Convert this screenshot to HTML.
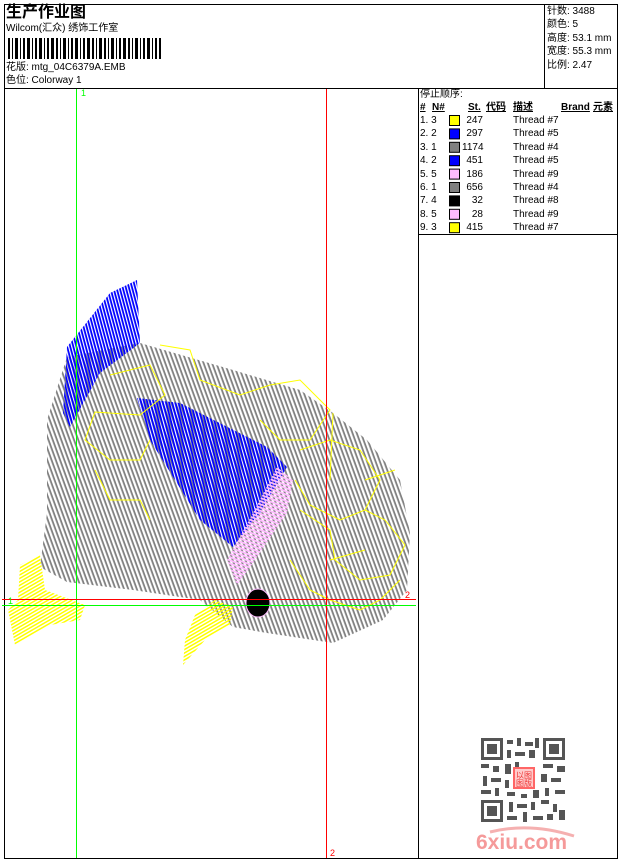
<!DOCTYPE html>
<html><head><meta charset="utf-8"><style>
body{margin:0;width:620px;height:860px;background:#fff;position:relative;overflow:hidden;font-family:"Liberation Sans","Noto Sans CJK SC",sans-serif;font-size:10px;color:#000}
.a{position:absolute;white-space:nowrap;line-height:12px}
.ln{position:absolute;background:#000}
.b{font-weight:bold;text-decoration:underline}
</style></head><body>
<div class="ln" style="left:4px;top:4px;width:614px;height:1px"></div>
<div class="ln" style="left:4px;top:4px;width:1px;height:855px"></div>
<div class="ln" style="left:617px;top:4px;width:1px;height:855px"></div>
<div class="ln" style="left:4px;top:858px;width:614px;height:1px"></div>
<div class="ln" style="left:4px;top:88px;width:614px;height:1px"></div>
<div class="ln" style="left:544px;top:4px;width:1px;height:84px"></div>
<div class="ln" style="left:418px;top:88px;width:1px;height:771px"></div>
<div class="ln" style="left:418px;top:234px;width:200px;height:1px"></div>

<div class="a" style="left:6px;top:4px;font-size:16px;line-height:18px;font-weight:bold">生产作业图</div>
<div class="a" style="left:6px;top:23px;font-size:10px">Wilcom(汇众) 绣饰工作室</div>
<svg class="a" style="left:8px;top:38px" width="155" height="21">
<g fill="#000">
<rect x="0" y="0" width="2" height="21"/><rect x="4" y="0" width="1" height="21"/><rect x="7" y="0" width="3" height="21"/><rect x="12" y="0" width="1" height="21"/><rect x="15" y="0" width="2" height="21"/><rect x="19" y="0" width="3" height="21"/><rect x="24" y="0" width="1" height="21"/><rect x="27" y="0" width="2" height="21"/><rect x="31" y="0" width="3" height="21"/><rect x="36" y="0" width="1" height="21"/><rect x="39" y="0" width="2" height="21"/><rect x="43" y="0" width="3" height="21"/><rect x="48" y="0" width="2" height="21"/><rect x="52" y="0" width="1" height="21"/><rect x="55" y="0" width="3" height="21"/><rect x="60" y="0" width="1" height="21"/><rect x="63" y="0" width="2" height="21"/><rect x="67" y="0" width="3" height="21"/><rect x="72" y="0" width="1" height="21"/><rect x="75" y="0" width="2" height="21"/><rect x="79" y="0" width="3" height="21"/><rect x="84" y="0" width="2" height="21"/><rect x="88" y="0" width="1" height="21"/><rect x="91" y="0" width="3" height="21"/><rect x="96" y="0" width="2" height="21"/><rect x="100" y="0" width="1" height="21"/><rect x="103" y="0" width="3" height="21"/><rect x="108" y="0" width="1" height="21"/><rect x="111" y="0" width="2" height="21"/><rect x="115" y="0" width="3" height="21"/><rect x="120" y="0" width="2" height="21"/><rect x="124" y="0" width="1" height="21"/><rect x="127" y="0" width="3" height="21"/><rect x="132" y="0" width="1" height="21"/><rect x="135" y="0" width="2" height="21"/><rect x="139" y="0" width="3" height="21"/><rect x="144" y="0" width="1" height="21"/><rect x="147" y="0" width="2" height="21"/><rect x="151" y="0" width="2" height="21"/>
</g></svg>
<div class="a" style="left:6px;top:62px">花版: mtg_04C6379A.EMB</div>
<div class="a" style="left:6px;top:75px">色位: Colorway 1</div>

<div class="a" style="left:547px;top:5px;line-height:13.4px">针数: 3488<br>颜色: 5<br>高度: 53.1 mm<br>宽度: 55.3 mm<br>比例: 2.47</div>

<div class="a" style="left:420px;top:89px">停止顺序:</div>
<div class="a b" style="left:420px;top:102px">#</div>
<div class="a b" style="left:432px;top:102px">N#</div>
<div class="a b" style="left:468px;top:102px">St.</div>
<div class="a b" style="left:486px;top:102px">代码</div>
<div class="a b" style="left:513px;top:102px">描述</div>
<div class="a b" style="left:561px;top:102px">Brand</div>
<div class="a b" style="left:593px;top:102px">元素</div>
<div class="a" style="left:420px;top:114px;line-height:13.4px">1. 3<br>2. 2<br>3. 1<br>4. 2<br>5. 5<br>6. 1<br>7. 4<br>8. 5<br>9. 3</div>
<div class="a" style="left:462px;top:114px;line-height:13.4px;text-align:right;width:21px">247<br>297<br>1174<br>451<br>186<br>656<br>32<br>28<br>415</div>
<div class="a" style="left:513px;top:114px;line-height:13.4px">Thread #7<br>Thread #5<br>Thread #4<br>Thread #5<br>Thread #9<br>Thread #4<br>Thread #8<br>Thread #9<br>Thread #7</div>
<svg class="a" style="left:449px;top:114px" width="12" height="122">
<g stroke="#000" stroke-width="1">
<rect x="0.5" y="1.5" width="10" height="10" fill="#ff0"/>
<rect x="0.5" y="14.9" width="10" height="10" fill="#00f"/>
<rect x="0.5" y="28.3" width="10" height="10" fill="#808080"/>
<rect x="0.5" y="41.7" width="10" height="10" fill="#00f"/>
<rect x="0.5" y="55.1" width="10" height="10" fill="#fbf"/>
<rect x="0.5" y="68.5" width="10" height="10" fill="#808080"/>
<rect x="0.5" y="81.9" width="10" height="10" fill="#000"/>
<rect x="0.5" y="95.3" width="10" height="10" fill="#fbf"/>
<rect x="0.5" y="108.7" width="10" height="10" fill="#ff0"/>
</g></svg>

<svg class="a" style="left:0;top:0" width="418" height="860">
<defs>
<pattern id="g" width="4" height="4" patternUnits="userSpaceOnUse" patternTransform="rotate(70)"><rect width="4" height="1.8" fill="#808080"/></pattern>
<pattern id="bl" width="3" height="3" patternUnits="userSpaceOnUse" patternTransform="rotate(75)"><rect width="3" height="1.8" fill="#00f"/></pattern>
<pattern id="pk" width="3" height="3" patternUnits="userSpaceOnUse" patternTransform="rotate(20)"><rect width="3" height="1.8" fill="#fbf"/></pattern>
<pattern id="yl" width="3" height="3" patternUnits="userSpaceOnUse" patternTransform="rotate(-30)"><rect width="3" height="1.5" fill="#ff0"/></pattern>
</defs>
<polygon fill="url(#g)" points="47,420 67,357 140,343 233,370 300,390 333,413 367,440 400,480 410,533 407,590 383,620 333,643 267,633 233,627 200,600 133,590 67,582 40,567 47,513"/>
<polygon fill="url(#bl)" points="63,413 67,347 110,293 137,280 140,343 100,373 70,427"/>
<polygon fill="url(#bl)" points="137,398 180,403 267,447 287,467 260,513 233,547 200,520 150,440"/>
<polygon fill="url(#pk)" points="277,467 293,480 287,513 253,563 237,585 227,560 253,513"/>
<g fill="none" stroke="#ff0" stroke-width="1">
<path d="M110,375 L150,365 165,395 140,415 95,412 85,440 110,460 140,460 150,440"/>
<path d="M160,345 L190,350 200,380 240,395 270,385 300,380 330,410 310,440 280,440 260,420"/>
<path d="M300,450 L330,440 360,450 380,480 365,510 340,520 310,505 295,480"/>
<path d="M300,510 L330,530 335,560 360,580 390,575 405,545 385,520 365,510"/>
<path d="M290,560 L310,590 330,600 360,610 380,600 400,580"/>
<path d="M95,470 L110,500 140,500 150,520"/>
<path d="M333,413 L330,480 M365,480 L395,470 M365,550 L330,560"/>
</g>
<polygon fill="url(#yl)" points="20,565 40,555 45,590 85,605 80,620 50,625 15,645 8,610 18,600"/>
<polygon fill="url(#yl)" points="233,607 215,600 195,615 185,640 183,665 205,640 230,625"/>
<ellipse cx="258" cy="603" rx="12" ry="14" fill="#000" stroke="#fbf" stroke-width="1"/>
<rect x="76" y="89" width="1" height="769" fill="#0f0"/>
<rect x="326" y="89" width="1" height="769" fill="#f00"/>
<rect x="2" y="599" width="414" height="1" fill="#f00"/>
<rect x="2" y="605" width="414" height="1" fill="#0f0"/>
<text x="81" y="96" fill="#0f0" font-size="9" font-family="Liberation Sans">1</text>
<text x="8" y="604" fill="#0f0" font-size="9" font-family="Liberation Sans">1</text>
<text x="405" y="598" fill="#f00" font-size="9" font-family="Liberation Sans">2</text>
<text x="330" y="856" fill="#f00" font-size="9" font-family="Liberation Sans">2</text>
</svg>

<svg class="a" style="left:481px;top:738px" width="84" height="84">
<g fill="#555">
<rect x="0" y="0" width="22" height="22"/><rect x="62" y="0" width="22" height="22"/><rect x="0" y="62" width="22" height="22"/>
</g>
<g fill="#fff"><rect x="3" y="3" width="16" height="16"/><rect x="65" y="3" width="16" height="16"/><rect x="3" y="65" width="16" height="16"/></g>
<g fill="#555"><rect x="6" y="6" width="10" height="10"/><rect x="68" y="6" width="10" height="10"/><rect x="6" y="68" width="10" height="10"/>
<rect x="26" y="2" width="6" height="4"/><rect x="36" y="0" width="4" height="8"/><rect x="44" y="4" width="8" height="4"/><rect x="54" y="0" width="4" height="10"/>
<rect x="26" y="12" width="4" height="8"/><rect x="34" y="14" width="10" height="4"/><rect x="48" y="12" width="6" height="8"/>
<rect x="0" y="26" width="8" height="4"/><rect x="12" y="28" width="6" height="6"/><rect x="24" y="26" width="6" height="10"/><rect x="34" y="24" width="4" height="6"/><rect x="62" y="26" width="10" height="4"/><rect x="76" y="28" width="8" height="6"/>
<rect x="2" y="38" width="4" height="10"/><rect x="10" y="40" width="10" height="4"/><rect x="24" y="42" width="4" height="8"/><rect x="60" y="36" width="6" height="8"/><rect x="70" y="40" width="10" height="4"/>
<rect x="0" y="52" width="10" height="4"/><rect x="14" y="50" width="4" height="8"/><rect x="26" y="54" width="8" height="4"/><rect x="40" y="56" width="6" height="4"/><rect x="52" y="52" width="6" height="8"/><rect x="64" y="50" width="4" height="8"/><rect x="74" y="52" width="10" height="4"/>
<rect x="28" y="64" width="4" height="10"/><rect x="36" y="66" width="10" height="4"/><rect x="50" y="64" width="4" height="8"/><rect x="60" y="62" width="8" height="4"/><rect x="72" y="66" width="4" height="8"/>
<rect x="26" y="78" width="10" height="4"/><rect x="42" y="74" width="4" height="10"/><rect x="52" y="78" width="10" height="4"/><rect x="66" y="76" width="6" height="6"/><rect x="78" y="72" width="6" height="10"/></g>
<rect x="32" y="29" width="22" height="22" fill="#f66"/>
<rect x="34" y="31" width="18" height="18" fill="#fcc"/>
<text x="35" y="40" font-size="8" fill="#e33" font-family="Noto Sans CJK SC,sans-serif">以图</text>
<text x="35" y="48" font-size="8" fill="#e33" font-family="Noto Sans CJK SC,sans-serif">图版</text>
</svg>
<svg class="a" style="left:470px;top:824px" width="110" height="30">
<path d="M20,8 Q60,-2 104,12" stroke="#f5b0b0" stroke-width="3" fill="none"/>
<text x="6" y="25" font-size="21" font-weight="bold" fill="#f59a9a" font-family="Liberation Sans">6xiu.com</text>
</svg>
</body></html>
